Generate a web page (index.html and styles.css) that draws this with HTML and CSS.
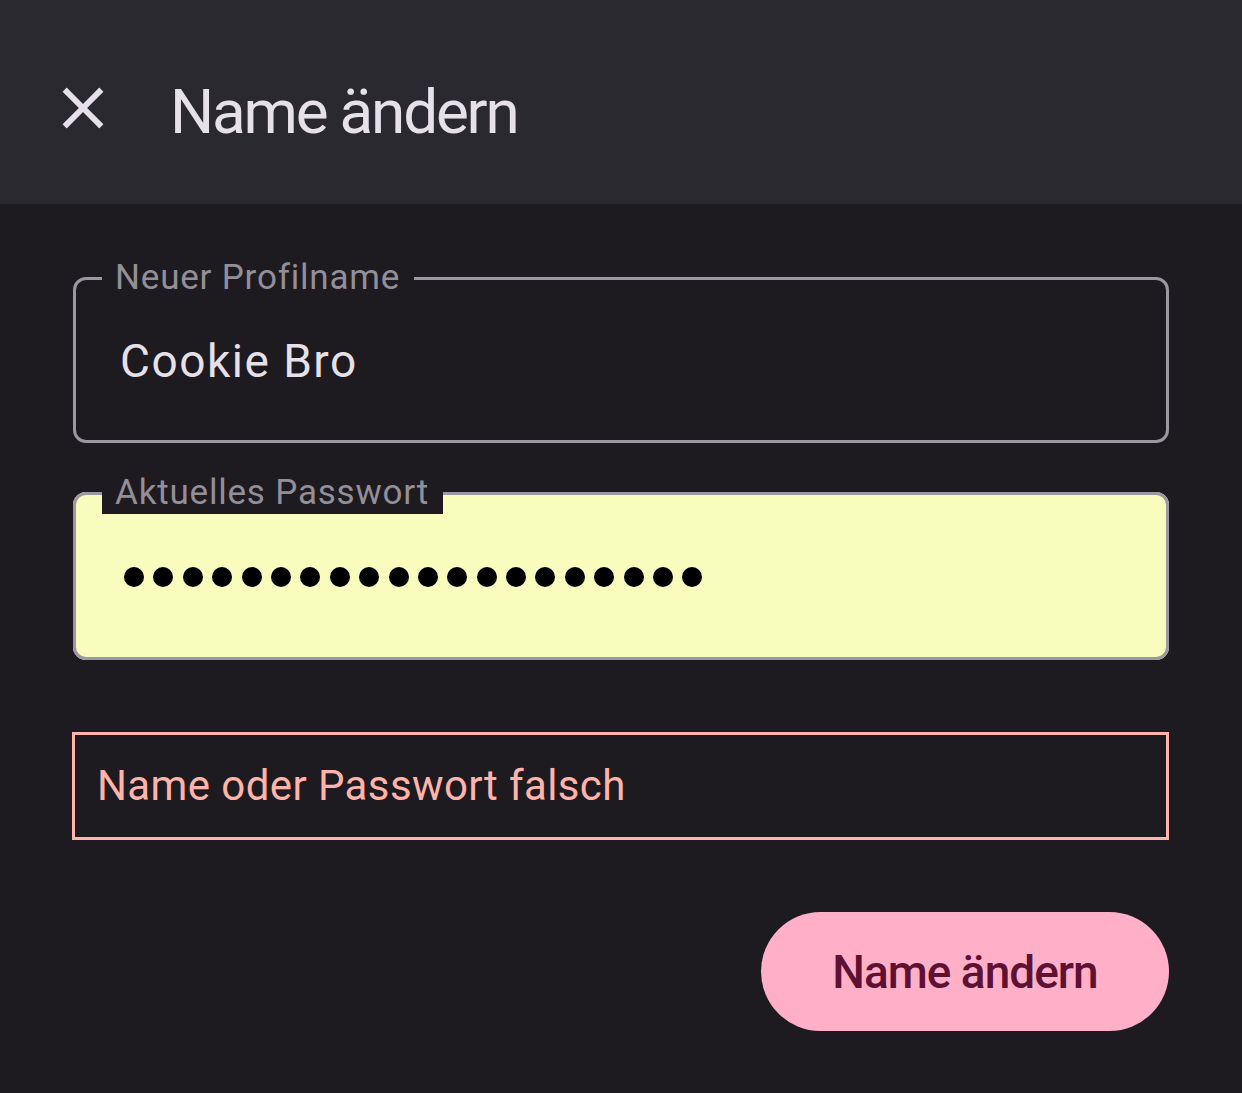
FILE: index.html
```html
<!DOCTYPE html>
<html lang="de">
<head>
<meta charset="utf-8">
<title>Name ändern</title>
<link rel="stylesheet" href="styles.css">
</head>
<body>
<header class="topbar">
  <svg class="close-icon" viewBox="0 0 24 24" aria-label="Schließen">
    <path d="M19 6.41L17.59 5 12 10.59 6.41 5 5 6.41 10.59 12 5 17.59 6.41 19 12 13.41 17.59 19 19 17.59 13.41 12z" fill="#e6e0e9"/>
  </svg>
  <h1 class="title">Name ändern</h1>
</header>
<main class="content">
  <fieldset class="field">
    <legend class="field-label">Neuer Profilname</legend>
    <div class="field-value">Cookie Bro</div>
  </fieldset>
  <fieldset class="field field-autofill">
    <legend class="field-label">Aktuelles Passwort</legend>
    <div class="dots">
      <span></span><span></span><span></span><span></span><span></span>
      <span></span><span></span><span></span><span></span><span></span>
      <span></span><span></span><span></span><span></span><span></span>
      <span></span><span></span><span></span><span></span><span></span>
    </div>
  </fieldset>
  <div class="error">Name oder Passwort falsch</div>
  <div class="actions">
    <button class="primary-btn">Name ändern</button>
  </div>
</main>
</body>
</html>
```

FILE: styles.css
```css
html, body {
  margin: 0;
  padding: 0;
}
body {
  width: 1242px;
  height: 1093px;
  background: #1d1b20;
  font-family: Roboto, "Noto Sans", sans-serif;
  overflow: hidden;
}
.topbar {
  height: 204px;
  box-sizing: border-box;
  background: #2b2930;
  display: flex;
  align-items: center;
  padding-left: 48px;
  padding-top: 18px;
}
.close-icon {
  width: 70px;
  height: 70px;
  flex: none;
  margin-bottom: 7px;
}
.title {
  margin: 0 0 0 52px;
  font-size: 62px;
  line-height: 63px;
  letter-spacing: -2.2px;
  font-weight: 400;
  color: #e6e0e9;
}
.content {
  padding: 53px 73px 0 73px;
  display: flex;
  flex-direction: column;
}
.field {
  margin: 0;
  padding: 0;
  border: 3px solid #9c98a1;
  border-radius: 13px;
  min-width: 0;
}
.field-label {
  margin-left: 26px;
  padding: 0 14px 0 13px;
  font-size: 35px;
  line-height: 42px;
  letter-spacing: 0.8px;
  color: #938f99;
  background: #1d1b20;
}
.field-value {
  padding: 37px 0 54px 44px;
  font-size: 46px;
  line-height: 50px;
  letter-spacing: 1.5px;
  color: #e6e0e9;
}
.field-autofill {
  margin-top: 29px;
  background: #f8fdbd;
}
.dots {
  display: flex;
  gap: 9.4px;
  padding: 53px 0 70px 48px;
}
.dots span {
  width: 20px;
  height: 20px;
  border-radius: 50%;
  background: #000;
}
.error {
  margin-top: 72px;
  margin-left: -1px;
  border: 3px solid #ffb4ab;
  padding: 26px 20px 26px 22px;
  font-size: 42px;
  line-height: 50px;
  letter-spacing: 0.4px;
  color: #ffb4ab;
}
.actions {
  display: flex;
  justify-content: flex-end;
  margin-top: 72px;
}
.primary-btn {
  width: 408px;
  height: 119px;
  border: none;
  border-radius: 60px;
  background: #ffb0c8;
  color: #5e1133;
  font-family: Roboto, "Noto Sans", sans-serif;
  font-size: 46px;
  letter-spacing: -1px;
  font-weight: 500;
  padding: 0;
}
```
